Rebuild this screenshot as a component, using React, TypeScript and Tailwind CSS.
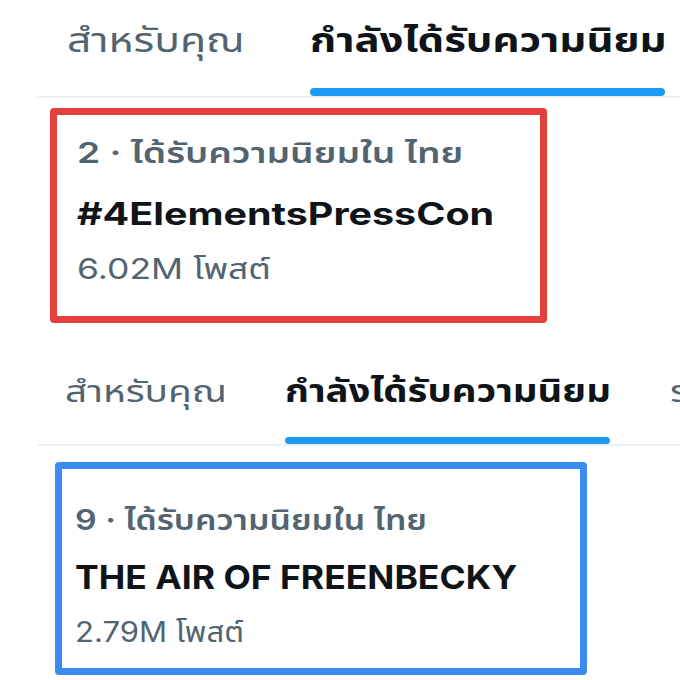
import React from "react";

const font = { fontFamily: 'Inter, "Noto Sans Thai", "Noto Sans", "Liberation Sans", sans-serif' };

export default function App() {
  return (
    <div className="relative h-[680px] w-[680px] overflow-hidden bg-white" style={font}>
      {/* Top tabs */}
      <div className="flex h-[96px] pl-[67px]">
        <div className="w-[243px] shrink-0 pt-[16px] text-[34px] leading-[48px] text-[#536471] whitespace-nowrap">
          <span className="inline-block origin-left [transform:scaleX(1.25)]">สำหรับคุณ</span>
        </div>
        <div className="flex w-[355px] shrink-0 flex-col justify-between">
          <div className="pt-[16px] text-[34px] leading-[48px] font-bold text-[#0f1419] whitespace-nowrap">
            <span className="inline-block origin-left [transform:scaleX(1.233)]">กำลังได้รับความนิยม</span>
          </div>
          <div className="h-[8px] rounded-full bg-[#1d9bf0]" />
        </div>
      </div>
      <div className="ml-[37px] h-[2px] bg-[#eceff1]" />

      {/* Red card */}
      <div className="ml-[50px] mt-[10px] h-[215px] w-[497px] rounded-[4px] border-[7px] border-[#e5403e] pl-[20px] pt-[18px]">
        <div className="text-[29px] leading-[40px] font-semibold text-[#536471] whitespace-nowrap">
          <span className="inline-block origin-left [transform:scaleX(1.284)]">2 · ได้รับความนิยมใน ไทย</span>
        </div>
        <div className="mt-[20px] text-[31px] leading-[42px] font-bold text-[#0f1419] whitespace-nowrap">
          <span className="inline-block origin-left [transform:scaleX(1.273)]">#4ElementsPressCon</span>
        </div>
        <div className="mt-[14px] text-[29px] leading-[40px] text-[#536471] whitespace-nowrap">
          <span className="inline-block origin-left [transform:scaleX(1.223)]">6.02M โพสต์</span>
        </div>
      </div>

      {/* Bottom tabs */}
      <div className="flex h-[121px] pl-[65px]">
        <div className="w-[220px] shrink-0 pt-[46px] text-[31px] leading-[44px] text-[#536471] whitespace-nowrap">
          <span className="inline-block origin-left [transform:scaleX(1.25)]">สำหรับคุณ</span>
        </div>
        <div className="flex w-[325px] shrink-0 flex-col justify-between">
          <div className="pt-[46px] text-[31px] leading-[44px] font-bold text-[#0f1419] whitespace-nowrap">
            <span className="inline-block origin-left [transform:scaleX(1.236)]">กำลังได้รับความนิยม</span>
          </div>
          <div className="h-[7px] rounded-full bg-[#1d9bf0]" />
        </div>
        <div className="ml-[60px] shrink-0 pt-[46px] text-[31px] leading-[44px] text-[#536471] whitespace-nowrap">
          <span className="inline-block origin-left [transform:scaleX(1.25)]">รายการ</span>
        </div>
      </div>
      <div className="ml-[38px] h-[2px] bg-[#eceff1]" />

      {/* Blue card */}
      <div className="ml-[55px] mt-[16px] h-[213px] w-[532px] rounded-[4px] border-[7px] border-[#3a8cf0] pl-[13px] pt-[32px]">
        <div className="text-[28px] leading-[38px] font-semibold text-[#536471] whitespace-nowrap">
          <span className="inline-block origin-left [transform:scaleX(1.21)]">9 · ได้รับความนิยมใน ไทย</span>
        </div>
        <div className="mt-[16px] text-[33px] leading-[44px] font-bold text-[#0f1419] whitespace-nowrap">
          <span className="inline-block origin-left [transform:scaleX(1.076)]">THE AIR OF FREENBECKY</span>
        </div>
        <div className="mt-[14px] text-[28px] leading-[38px] text-[#536471] whitespace-nowrap">
          <span className="inline-block origin-left [transform:scaleX(1.11)]">2.79M โพสต์</span>
        </div>
      </div>
    </div>
  );
}
